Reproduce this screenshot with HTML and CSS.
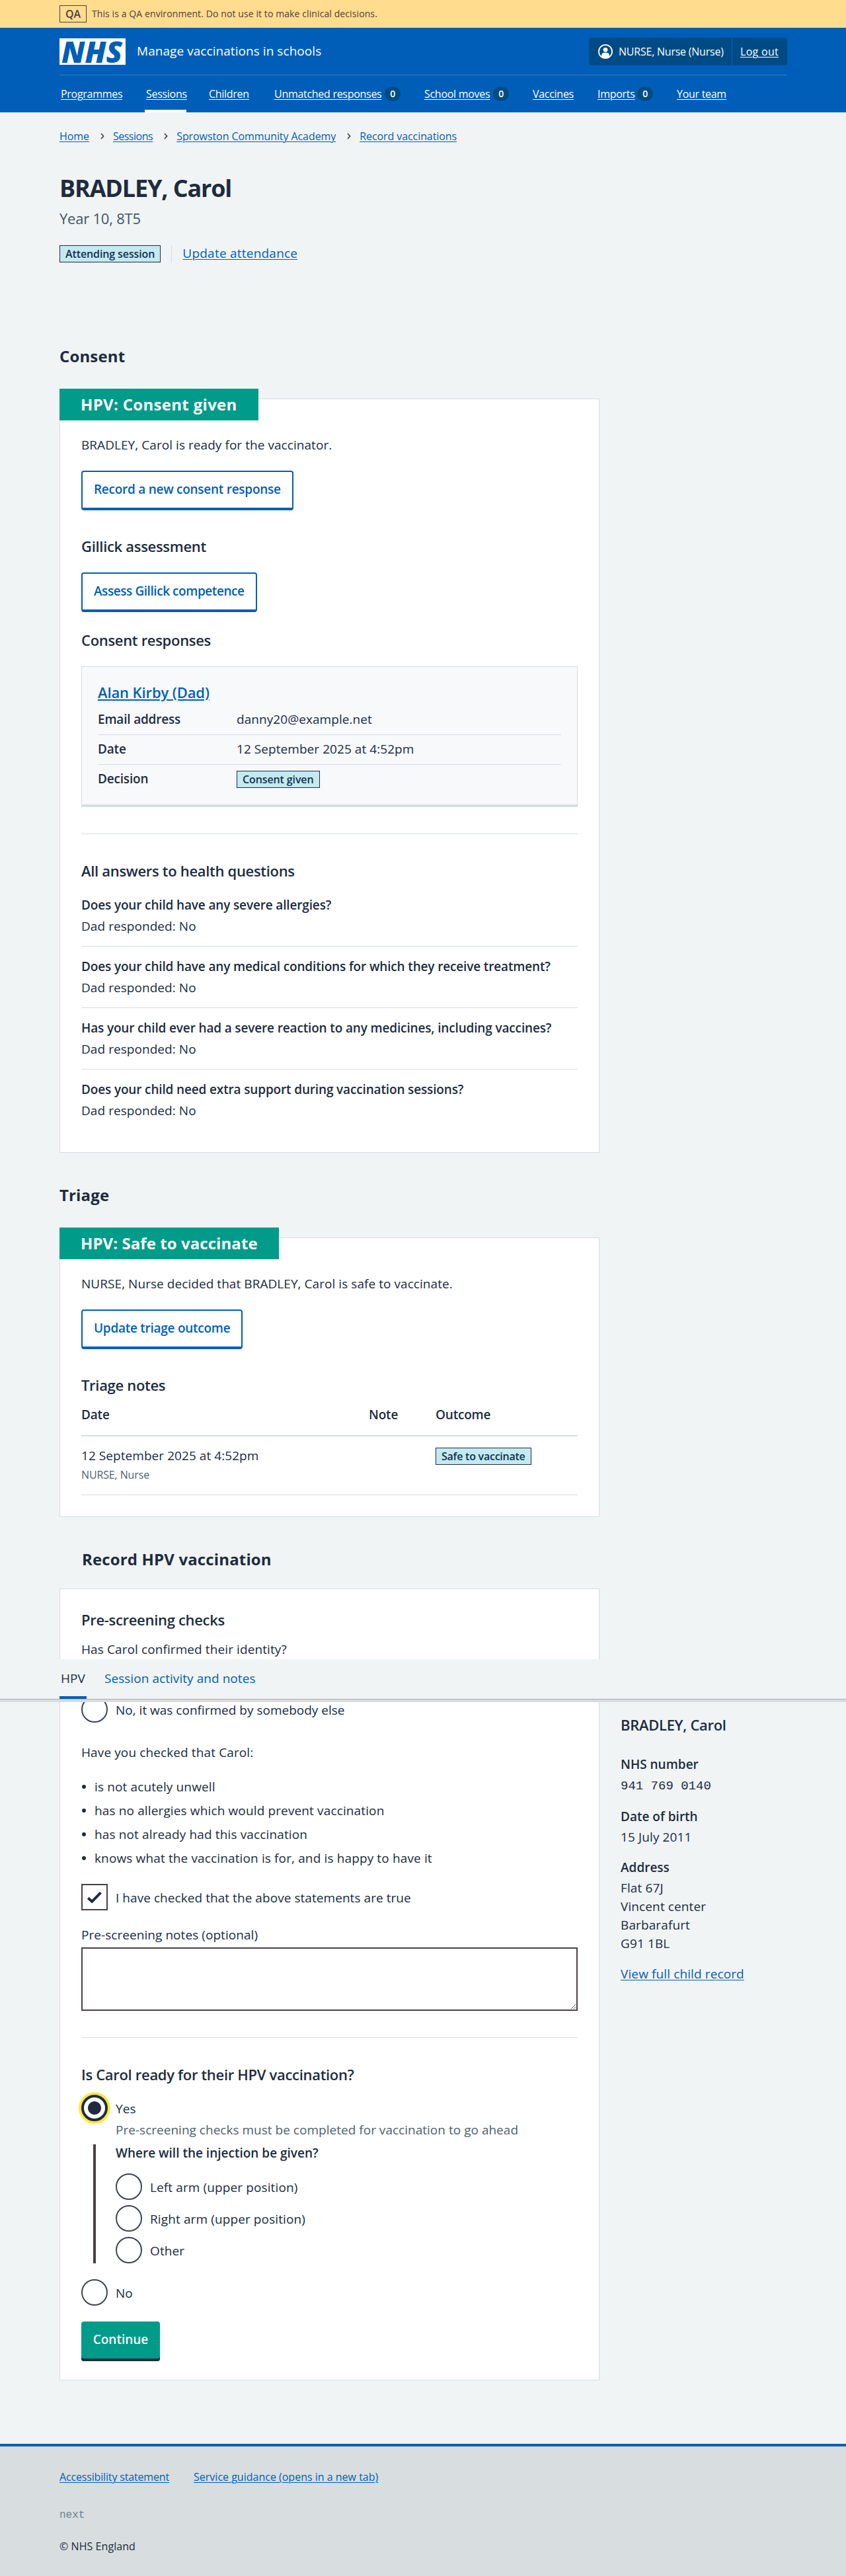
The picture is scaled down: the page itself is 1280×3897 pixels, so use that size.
FILE: index.html
```html
<!DOCTYPE html>
<html lang="en">
<head>
<meta charset="utf-8">
<title>BRADLEY, Carol – Manage vaccinations in schools</title>
<link rel="stylesheet" href="styles.css">
</head>
<body>
<div class="environment">
  <div class="container environment-inner">
    <strong class="tag tag-environment">QA</strong>
    <span>This is a QA environment. Do not use it to make clinical decisions.</span>
  </div>
</div>

<header class="header">
  <div class="container">
    <div class="header-top">
      <svg class="logo" width="100" height="40" viewBox="0 0 100 40" role="img" aria-label="NHS">
        <rect width="100" height="40" fill="#fff"/>
        <text class="logo-text" x="3" y="36.5" textLength="92" lengthAdjust="spacingAndGlyphs">NHS</text>
      </svg>
      <span class="service-name">Manage vaccinations in schools</span>
      <div class="account">
        <span class="account-user">
          <svg width="22" height="22" viewBox="0 0 22 22" aria-hidden="true">
            <circle cx="11" cy="11" r="10.1" fill="none" stroke="#fff" stroke-width="1.8"/>
            <circle cx="11" cy="8.3" r="3.4" fill="#fff"/>
            <path d="M5.2 18.5v-2a3.8 3.8 0 0 1 3.8-3.8h4a3.8 3.8 0 0 1 3.8 3.8v2A9.5 9.5 0 0 1 11 21a9.5 9.5 0 0 1-5.8-2.500z" fill="#fff"/>
          </svg>
          NURSE, Nurse (Nurse)
        </span>
        <span class="account-logout"><a href="#">Log out</a></span>
      </div>
    </div>
    <nav class="nav">
      <span class="nav-item"><a href="#">Programmes</a></span>
      <span class="nav-item nav-item-current"><a href="#">Sessions</a></span>
      <span class="nav-item"><a href="#">Children</a></span>
      <span class="nav-item"><a href="#">Unmatched responses</a><span class="count">0</span></span>
      <span class="nav-item"><a href="#">School moves</a><span class="count">0</span></span>
      <span class="nav-item"><a href="#">Vaccines</a></span>
      <span class="nav-item"><a href="#">Imports</a><span class="count">0</span></span>
      <span class="nav-item"><a href="#">Your team</a></span>
    </nav>
  </div>
</header>

<div class="container">
  <nav class="breadcrumb">
    <a href="#">Home</a>
    <svg class="chevron" width="6" height="10" viewBox="0 0 6 10"><path d="M1 1l3.600 4L1 9"/></svg>
    <a class="breadcrumb-sessions" href="#">Sessions</a>
    <svg class="chevron" width="6" height="10" viewBox="0 0 6 10"><path d="M1 1l3.600 4L1 9"/></svg>
    <a href="#">Sprowston Community Academy</a>
    <svg class="chevron" width="6" height="10" viewBox="0 0 6 10"><path d="M1 1l3.600 4L1 9"/></svg>
    <a href="#">Record vaccinations</a>
  </nav>

  <main>
    <h1 class="title">BRADLEY, Carol</h1>
    <p class="caption">Year 10, 8T5</p>
    <div class="attendance">
      <strong class="tag">Attending session</strong>
      <span class="attendance-action"><a href="#">Update attendance</a></span>
    </div>

    <section class="consent">
      <h2 class="heading">Consent</h2>
      <div class="card card-feature">
        <h3 class="card-label">HPV: Consent given</h3>
        <p class="card-intro">BRADLEY, Carol is ready for the vaccinator.</p>
        <a class="button button-secondary" href="#">Record a new consent response</a>
        <h4 class="subheading">Gillick assessment</h4>
        <a class="button button-secondary button-gillick" href="#">Assess Gillick competence</a>
        <h4 class="subheading subheading-responses">Consent responses</h4>
        <div class="response">
          <h5 class="response-name"><a href="#">Alan Kirby (Dad)</a></h5>
          <dl class="summary">
            <div class="summary-row"><dt>Email address</dt><dd>danny20@example.net</dd></div>
            <div class="summary-row"><dt>Date</dt><dd>12 September 2025 at 4:52pm</dd></div>
            <div class="summary-row"><dt>Decision</dt><dd><strong class="tag">Consent given</strong></dd></div>
          </dl>
        </div>
        <hr class="rule">
        <h4 class="subheading">All answers to health questions</h4>
        <dl class="answers">
          <div class="answer"><dt>Does your child have any severe allergies?</dt><dd>Dad responded: No</dd></div>
          <div class="answer"><dt>Does your child have any medical conditions for which they receive treatment?</dt><dd>Dad responded: No</dd></div>
          <div class="answer"><dt>Has your child ever had a severe reaction to any medicines, including vaccines?</dt><dd>Dad responded: No</dd></div>
          <div class="answer"><dt>Does your child need extra support during vaccination sessions?</dt><dd>Dad responded: No</dd></div>
        </dl>
      </div>
    </section>

    <section class="triage">
      <h2 class="heading">Triage</h2>
      <div class="card card-feature">
        <h3 class="card-label">HPV: Safe to vaccinate</h3>
        <p class="card-intro">NURSE, Nurse decided that BRADLEY, Carol is safe to vaccinate.</p>
        <a class="button button-secondary" href="#">Update triage outcome</a>
        <h4 class="subheading">Triage notes</h4>
        <div class="notes">
          <div class="notes-row notes-head"><span>Date</span><span>Note</span><span>Outcome</span></div>
          <div class="notes-row notes-body">
            <div>12 September 2025 at 4:52pm<div class="notes-author">NURSE, Nurse</div></div>
            <div></div>
            <div class="notes-outcome"><strong class="tag">Safe to vaccinate</strong></div>
          </div>
        </div>
      </div>
    </section>

    <div class="record">
      <section class="record-main">
        <h2 class="heading record-heading">Record HPV vaccination</h2>
        <form class="card card-form">
          <h3 class="subheading subheading-first">Pre-screening checks</h3>
          <p class="identity">Has Carol confirmed their identity?</p>
          <div class="choice choice-identity"><span class="radio"></span>No, it was confirmed by somebody else</div>
          <p class="checked-that">Have you checked that Carol:</p>
          <ul class="checks">
            <li>is not acutely unwell</li>
            <li>has no allergies which would prevent vaccination</li>
            <li>has not already had this vaccination</li>
            <li>knows what the vaccination is for, and is happy to have it</li>
          </ul>
          <div class="choice choice-confirm">
            <span class="checkbox"><svg width="22" height="18" viewBox="0 0 22 18"><path d="M1.300 10.200l5.900 5.500L20.500 2.200" fill="none" stroke="#202b3e" stroke-width="4"/></svg></span>
            I have checked that the above statements are true
          </div>
          <label class="notes-label" for="notes">Pre-screening notes (optional)</label>
          <textarea class="textarea" id="notes"></textarea>
          <hr class="rule">
          <h3 class="subheading">Is Carol ready for their HPV vaccination?</h3>
          <div class="choice choice-yes"><span class="radio radio-selected"></span>Yes</div>
          <p class="hint">Pre-screening checks must be completed for vaccination to go ahead</p>
          <div class="conditional">
            <h4 class="question">Where will the injection be given?</h4>
            <div class="choices">
              <div class="choice"><span class="radio"></span>Left arm (upper position)</div>
              <div class="choice"><span class="radio"></span>Right arm (upper position)</div>
              <div class="choice"><span class="radio"></span>Other</div>
            </div>
          </div>
          <div class="choice choice-no"><span class="radio"></span>No</div>
          <button class="button button-primary" type="button">Continue</button>
        </form>
      </section>

      <aside class="patient">
        <h2 class="patient-name">BRADLEY, Carol</h2>
        <dl class="patient-details">
          <div><dt>NHS number</dt><dd class="nhs-number">941 769 0140</dd></div>
          <div><dt>Date of birth</dt><dd>15 July 2011</dd></div>
          <div><dt>Address</dt><dd>Flat 67J<br>Vincent center<br>Barbarafurt<br>G91 1BL</dd></div>
        </dl>
        <a href="#">View full child record</a>
      </aside>
    </div>
  </main>
</div>

<nav class="tabs">
  <div class="container tabs-inner">
    <span class="tab tab-current">HPV</span>
    <a class="tab" href="#">Session activity and notes</a>
  </div>
</nav>

<footer class="footer">
  <div class="container">
    <div class="footer-links">
      <a href="#">Accessibility statement</a>
      <a href="#">Service guidance (opens in a new tab)</a>
    </div>
    <p class="footer-version">next</p>
    <p class="footer-copyright">© NHS England</p>
  </div>
</footer>
</body>
</html>
```
FILE: styles.css
```css
* { box-sizing: border-box; }

body {
  position: relative;
  margin: 0;
  background: #f0f4f5;
  color: #202b3e;
  font: 400 19px/28px "Open Sans", "Noto Sans", sans-serif;
  letter-spacing: 0.003em;
}

h1, h2, h3, h4, h5, p, dl, dd, ul { margin: 0; padding: 0; }

a {
  color: #005eb8;
  text-decoration-thickness: 1px;
  text-underline-offset: 2px;
}

.container { width: 1100px; margin: 0 auto; }

.tag {
  display: inline-block;
  height: 26px;
  padding: 0 8px;
  border: 1px solid #202b3e;
  background: #c4e9f0;
  color: #0e3150;
  font-size: 16px;
  font-weight: 600;
  line-height: 24px;
  letter-spacing: -0.007em;
  white-space: nowrap;
}

/* Environment banner */
.environment { background: #ffdc8e; color: #4b3f41; }
.environment-inner { display: flex; align-items: center; gap: 8px; height: 42px; font-size: 14px; letter-spacing: 0.007em; }
.tag-environment { background: none; border-color: #4b3f41; color: #4b3f41; }

/* Header */
.header { background: #005eb8; color: #fff; }
.header a { color: #fff; }
.header-top { display: flex; align-items: center; height: 72px; padding-top: 1px; border-bottom: 1px solid #4080b5; }
.logo { overflow: visible; }
.logo-text { font: italic 800 45px "Open Sans", sans-serif; fill: #005eb8; letter-spacing: 0; }
.service-name { margin-left: 17px; padding-bottom: 3px; }
.account {
  display: flex;
  height: 42px;
  margin: 0 -1px 0 auto;
  border-radius: 4px;
  background: #004b85;
  font-size: 16px;
  line-height: 42px;
}
.account-user { display: flex; align-items: center; gap: 9px; width: 216px; padding-left: 14px; letter-spacing: -0.014em; white-space: nowrap; }
.account-logout { width: 84px; padding-left: 12px; border-left: 1px solid #005eb8; letter-spacing: 0.018em; }

.nav {
  display: grid;
  grid-template-columns: 97px 63px 67px 195px 132px 66px 88px 83px;
  column-gap: 32px;
  height: 56px;
  font-size: 16px;
  line-height: 56px;
  letter-spacing: -0.018em;
  white-space: nowrap;
}
.nav-item { display: flex; align-items: center; justify-content: space-between; padding: 0 0 0 2px; }
.nav-item-current { box-shadow: inset 0 -4px #fff; }
.count {
  width: 24px;
  height: 22px;
  margin-right: 2px;
  border-radius: 12px;
  background: #004b85;
  font-size: 14px;
  font-weight: 600;
  line-height: 22px;
  text-align: center;
}

/* Page heading */
.breadcrumb { display: flex; align-items: center; height: 24px; margin-top: 24px; font-size: 16px; line-height: 24px; letter-spacing: -0.005em; }
.breadcrumb-sessions { letter-spacing: -0.03em; }
.chevron { margin: 0 13px 0 17px; fill: none; stroke: #4b3f41; stroke-width: 1.7; }
.title { margin-top: 45px; font-size: 36px; font-weight: 700; line-height: 44px; letter-spacing: -0.032em; }
.caption { margin-top: 7px; color: #425563; font-size: 22px; line-height: 32px; letter-spacing: -0.01em; }
.attendance { display: flex; height: 26px; margin-top: 25px; line-height: 24px; }
.attendance-action { margin-left: 16px; padding-left: 16px; border-left: 1px solid #d8dde0; letter-spacing: 0.012em; }

.heading { font-size: 24px; font-weight: 700; line-height: 32px; letter-spacing: 0.006em; }
.subheading { margin: 40px 0 0; font-size: 22px; font-weight: 600; line-height: 28px; letter-spacing: -0.014em; }
.consent { margin-top: 126px; }
.triage { margin-top: 48px; }

/* Cards */
.card { width: 817px; border: 1px solid #d8dde0; background: #fff; }
.card-feature { margin-top: 48px; padding: 0 32px 32px; }
.card-label {
  width: fit-content;
  margin: -16px 0 0 -33px;
  padding: 0 32px;
  background: #009b89;
  color: #fff;
  font-size: 24px;
  font-weight: 700;
  line-height: 48px;
  letter-spacing: 0.013em;
}
.triage .card-label { letter-spacing: 0.003em; }
.card-intro { margin-top: 23px; }

.button {
  display: block;
  width: fit-content;
  height: 60px;
  border-radius: 4px;
  font: 600 19px/28px "Open Sans", "Noto Sans", sans-serif;
  letter-spacing: -0.014em;
  text-decoration: none;
}
.button-secondary { margin-top: 25px; padding: 12px 17px 14px; border: 2px solid #005eb8; border-bottom-width: 4px; background: #fff; }
.button-gillick { margin-top: 26px; letter-spacing: -0.023em; }
.subheading-responses { margin-top: 28px; }

.response { margin-top: 26px; padding: 24px 24px 25px; border: 1px solid #d8dde0; border-bottom-width: 4px; background: #f8f9fb; }
.response-name { font-size: 22px; font-weight: 600; line-height: 28px; letter-spacing: -0.005em; }
.response-name a { text-decoration-thickness: 2px; }
.summary { margin-top: 6px; }
.summary-row { display: flex; padding: 7px 0 9px; border-bottom: 1px solid #d8dde0; }
.summary-row:last-child { padding-bottom: 0; border: 0; }
.summary-row dt { width: 210px; font-weight: 600; letter-spacing: -0.01em; }
.summary-row dd { display: flex; height: 28px; align-items: flex-end; }

.rule { height: 1px; margin: 40px 0 0; border: 0; background: #d8dde0; }
.rule + .subheading { margin-top: 41px; }

.answers { margin-top: 24px; }
.answer { padding-bottom: 16px; }
.answer + .answer { padding-top: 16px; border-top: 1px solid #d8dde0; }
.answer:last-child { padding-bottom: 17px; }
.answer dt { font-weight: 600; letter-spacing: -0.008em; }
.answer dd { margin-top: 4px; }

/* Triage notes */
.notes { margin-top: 17px; }
.notes-row { display: grid; grid-template-columns: 435px 101px 1fr; }
.notes-head { padding-bottom: 17px; border-bottom: 2px solid #d8dde0; font-weight: 600; letter-spacing: -0.01em; }
.notes-body { padding: 15px 0 18px; border-bottom: 1px solid #d8dde0; }
.notes-author { margin-top: 3px; color: #4c6272; font-size: 16px; line-height: 24px; letter-spacing: -0.008em; }
.notes-outcome { display: flex; padding-top: 2px; }
.notes-outcome .tag { letter-spacing: -0.015em; }

/* Vaccination form */
.record { display: grid; grid-template-columns: 817px 1fr; column-gap: 32px; margin-top: 48px; }
.record-heading { padding-left: 34px; }
.card-form { margin-top: 28px; padding: 32px 32px 28px; }
.subheading-first { margin-top: 0; }
.identity { margin-top: 17px; letter-spacing: 0.005em; }

.choice { display: flex; align-items: center; gap: 12px; height: 40px; padding-top: 2px; }
.radio, .checkbox { width: 40px; height: 40px; margin-top: -2px; }
.radio { border: 2px solid #3d4550; border-radius: 50%; background: #fff; }
.radio-selected {
  border: 4px solid #202b3e;
  background: radial-gradient(circle, #202b3e 9.5px, #fff 10.5px);
  box-shadow: 0 0 0 4px #ffe83c;
}
.checkbox { display: flex; align-items: center; justify-content: center; border: 2px solid #4b3f41; }
.choice-identity { margin-top: 57px; letter-spacing: 0; }
.choice-confirm { margin-top: 25px; }
.choice-yes { margin-top: 17px; }
.choice-no { margin-top: 24px; }
.checked-that { margin-top: 31px; letter-spacing: 0.006em; }
.checks { display: grid; gap: 8px; margin-top: 24px; list-style: none; letter-spacing: 0.007em; }
.checks li { display: flex; align-items: center; gap: 13px; }
.checks li::before { content: ""; width: 6px; height: 6px; margin-left: 1px; border-radius: 50%; background: #202b3e; }

.notes-label { display: block; margin-top: 23px; }
.textarea { display: block; width: 100%; height: 96px; margin-top: 5px; border: 2px solid #4b3f41; border-radius: 0; background: #fff; }
.hint { margin: -1px 0 0 52px; color: #4c6272; letter-spacing: 0.001em; }
.conditional { height: 180px; margin: 8px 0 0 18px; padding-left: 30px; border-left: 4px solid #4b3f41; }
.question { font-size: 19px; font-weight: 600; line-height: 26px; letter-spacing: 0; }
.choices { display: grid; gap: 8px; margin-top: 18px; letter-spacing: 0.006em; }
.button-primary { width: 119px; margin-top: 24px; padding: 13px 0 19px; border: 0; background: #009b89; box-shadow: inset 0 -4px #202b3e; color: #fff; letter-spacing: 0; }

/* Patient details */
.patient { margin-top: 252px; letter-spacing: 0.006em; }
.patient-name { font-size: 22px; font-weight: 600; line-height: 28px; letter-spacing: -0.014em; }
.patient-details { display: grid; gap: 18px; margin: 32px 0 18px; }
.patient-details dt { font-weight: 600; letter-spacing: 0; }
.patient-details dd { margin-top: 3px; }
.patient-details .nhs-number { margin-top: 5px; font-family: "Liberation Mono", monospace; letter-spacing: 0; }

/* Tab bar, pinned over the page content */
.tabs { position: absolute; top: 2510px; left: 0; right: 0; height: 61px; border-bottom: 1px solid #b3aca8; background: #f0f4f5; box-shadow: 0 4px #d8dde0; }
.tabs-inner { display: flex; gap: 25px; height: 60px; line-height: 59px; }
.tab { padding: 0 2px; text-decoration: none; }
.tab-current { box-shadow: inset 0 -4px #005eb8; }

/* Footer */
.footer { margin-top: 96px; padding: 34px 0 33px; border-top: 4px solid #005eb8; background: #d8dde0; font-size: 16px; line-height: 24px; }
.footer-links { display: flex; gap: 37px; letter-spacing: 0; }
.footer-links a:first-child { letter-spacing: -0.010em; }
.footer-version { margin-top: 34px; color: #6b8292; font-family: "Liberation Mono", monospace; letter-spacing: 0; }
.footer-copyright { margin-top: 23px; }
```
